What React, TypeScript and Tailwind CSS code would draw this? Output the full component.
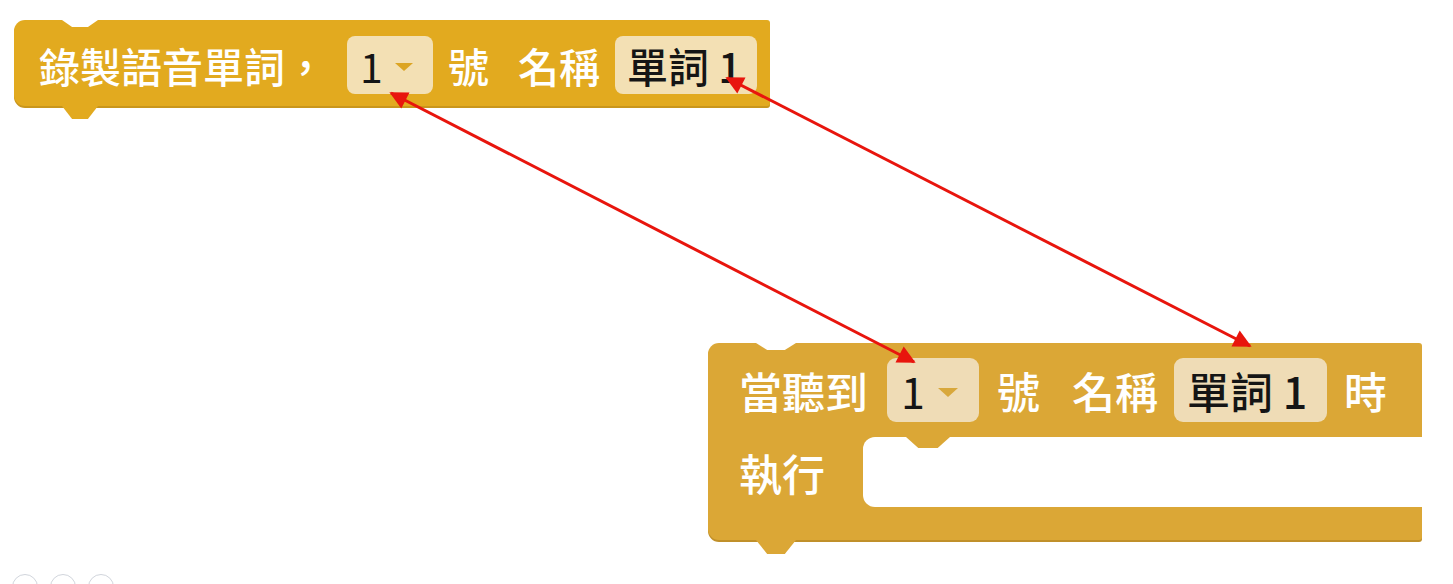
import React from "react";

const font = { fontFamily: '"Noto Sans CJK TC", "Noto Sans", sans-serif' };

const Dropdown = ({ big }: { big?: boolean }) => (
  <div
    className={
      big
        ? "flex items-center h-[64px] w-[92px] rounded-[9px] bg-[#efdcb6] pl-[14px]"
        : "flex items-center h-[58px] w-[86px] rounded-[8px] bg-[#f3e0b4] pl-[13px]"
    }
  >
    <span className="text-[#151515] leading-none font-normal">1</span>
    <span
      className={
        big
          ? "ml-[13px] mt-[4px] border-x-[10px] border-t-[9px] border-x-transparent border-t-[#d8a83c]"
          : "ml-[12px] mt-[4px] border-x-[9px] border-t-[8px] border-x-transparent border-t-[#dca524]"
      }
    />
  </div>
);

const TextField = ({ big }: { big?: boolean }) => (
  <div
    className={
      big
        ? "flex items-center h-[64px] w-[153px] rounded-[9px] bg-[#efdcb6] pl-[13px] text-[#151515] leading-none"
        : "flex items-center h-[58px] w-[142px] rounded-[8px] bg-[#f3e0b4] pl-[12px] text-[#151515] leading-none"
    }
  >
    單詞&nbsp;1
  </div>
);

const App = () => {
  return (
    <div className="relative w-[1453px] h-[584px] overflow-hidden bg-white" style={font}>
      {/* block 1 */}
      <div className="absolute left-[14px] top-[20px] w-[756px] h-[86px] rounded-l-[11px] rounded-r-[3px] bg-[#e2aa1f] shadow-[0_2px_0_#c9961c] text-[41px] font-medium text-white">
        <div className="absolute left-[48px] top-0 w-[36px] h-[7px] bg-white [clip-path:polygon(0_0,100%_0,72%_100%,28%_100%)]" />
        <div className="absolute left-[48px] top-[86px] w-[36px] h-[13px] bg-[#e2aa1f] [clip-path:polygon(0_0,100%_0,72%_100%,28%_100%)]" />
        <div className="flex items-center h-full pl-[25px] pt-[4px] leading-none">
          <span>錄製語音單詞，</span>
          <div className="ml-[21px]">
            <Dropdown />
          </div>
          <span className="ml-[15px]">號</span>
          <span className="ml-[29px]">名稱</span>
          <div className="ml-[15px]">
            <TextField />
          </div>
        </div>
      </div>

      {/* block 2 */}
      <div className="absolute left-[708px] top-[343px] w-[714px] h-[197px] rounded-l-[11px] rounded-r-[3px] bg-[#dba736] shadow-[0_2px_0_#c0902a] text-[43px] font-medium text-white">
        <div className="absolute left-[48px] top-0 w-[40px] h-[7px] bg-white [clip-path:polygon(0_0,100%_0,72%_100%,28%_100%)]" />
        <div className="absolute left-[48px] top-[197px] w-[40px] h-[14px] bg-[#dba736] [clip-path:polygon(0_0,100%_0,72%_100%,28%_100%)]" />
        <div className="flex items-center h-[94px] pl-[31px] leading-none">
          <span>當聽到</span>
          <div className="ml-[19px]">
            <Dropdown big />
          </div>
          <span className="ml-[18px]">號</span>
          <span className="ml-[32px]">名稱</span>
          <div className="ml-[16px]">
            <TextField big />
          </div>
          <span className="ml-[17px]">時</span>
        </div>
        <div className="flex h-[70px]">
          <div className="flex items-center w-[155px] pl-[31px] leading-none">執行</div>
          <div className="relative flex-1 rounded-l-[12px] bg-white">
            <div className="absolute left-[43px] top-0 w-[44px] h-[11px] bg-[#dba736] [clip-path:polygon(0_0,100%_0,72%_100%,28%_100%)]" />
          </div>
        </div>
      </div>

      {/* arrows */}
      <svg className="absolute inset-0 pointer-events-none" width="1453" height="584">
        <defs>
          <marker id="ah" viewBox="0 0 10 10" refX="9" refY="5" markerWidth="7" markerHeight="6" orient="auto-start-reverse" markerUnits="strokeWidth">
            <path d="M0 0 L10 5 L0 10 z" fill="#e8150d" />
          </marker>
        </defs>
        <line x1="391" y1="93" x2="914" y2="362" stroke="#e8150d" strokeWidth="3" markerStart="url(#ah)" markerEnd="url(#ah)" />
        <line x1="727" y1="78" x2="1250" y2="346" stroke="#e8150d" strokeWidth="3" markerStart="url(#ah)" markerEnd="url(#ah)" />
      </svg>

      {/* faint toolbar icons at bottom */}
      <div className="absolute left-[12px] top-[574px] flex gap-[12px]">
        <div className="w-[26px] h-[26px] rounded-full border border-gray-300" />
        <div className="w-[26px] h-[26px] rounded-full border border-gray-300" />
        <div className="w-[26px] h-[26px] rounded-full border border-gray-300" />
      </div>
    </div>
  );
};

export default App;
